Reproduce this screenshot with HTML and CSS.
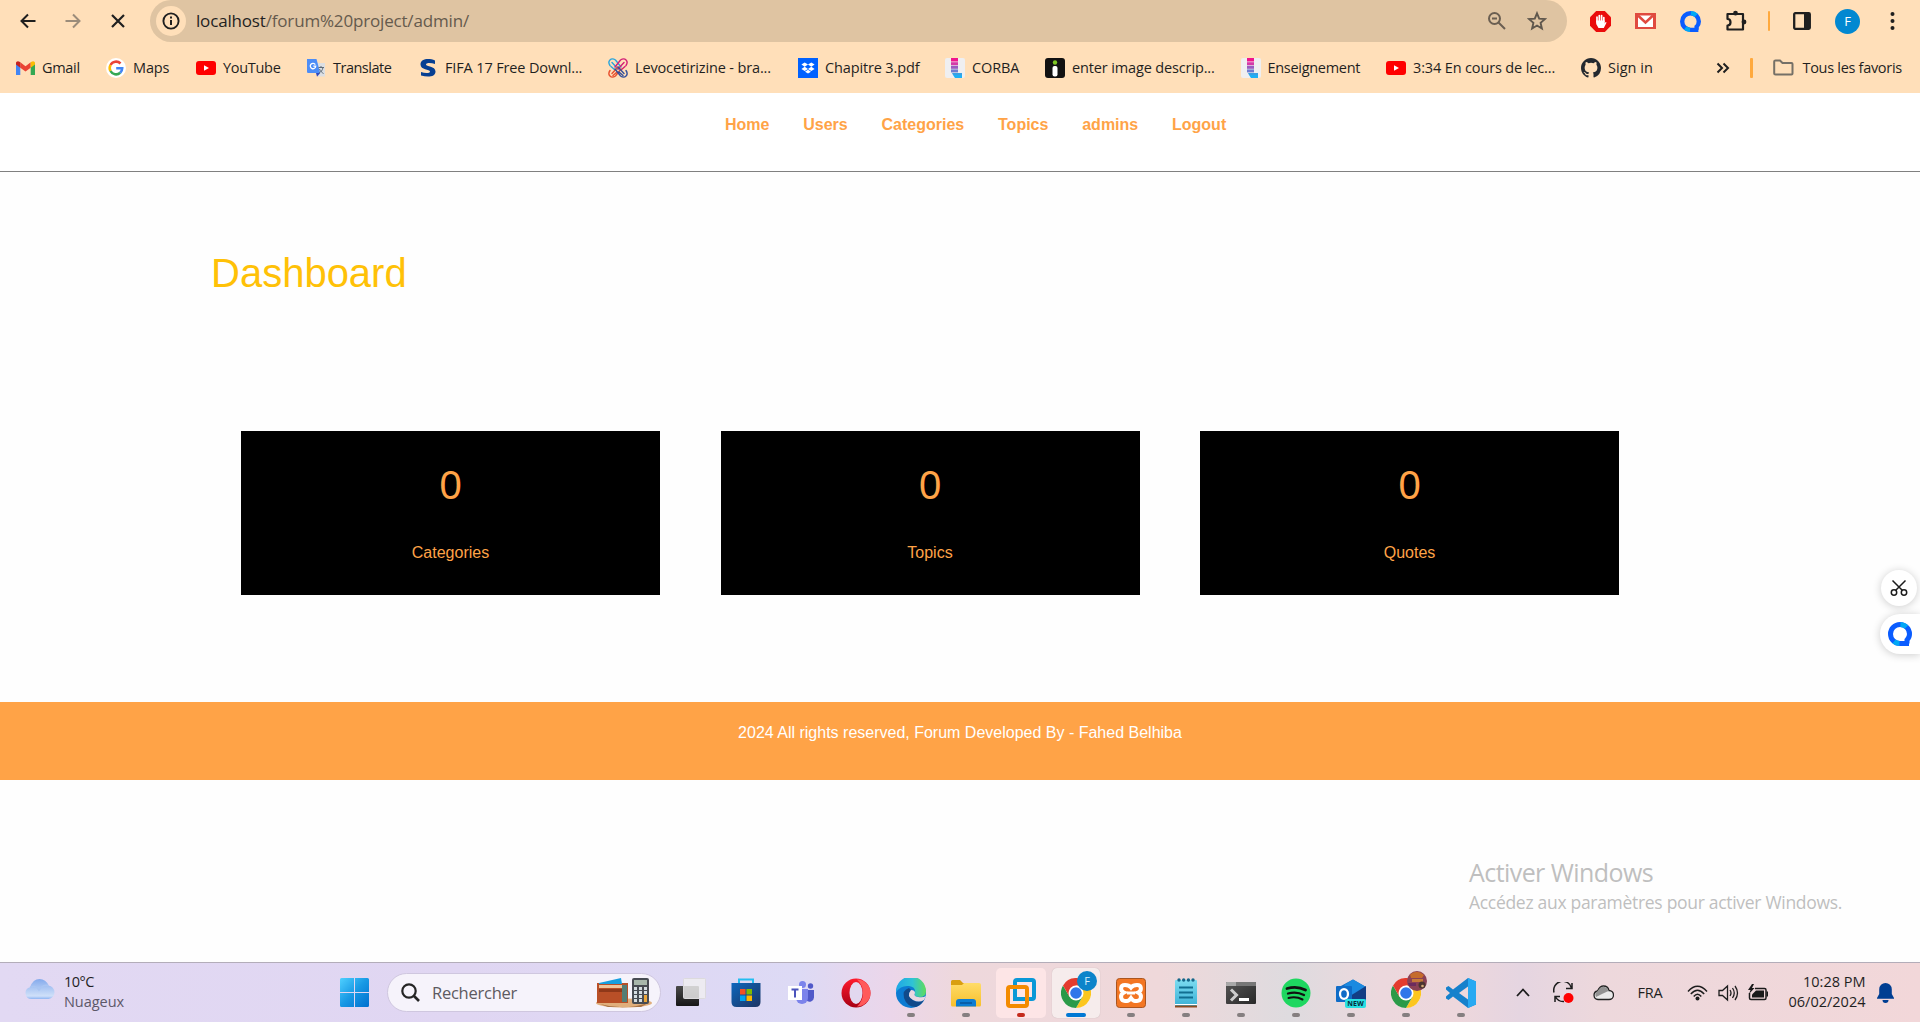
FILE: index.html
```
<!DOCTYPE html>
<html lang="fr">
<head>
<meta charset="utf-8">
<title>Dashboard</title>
<link rel="stylesheet" href="styles.css">
</head>
<body>
<svg class="defs" width="0" height="0" aria-hidden="true">
  <defs>
    <linearGradient id="gWin" x1="0" y1="0" x2="1" y2="1"><stop offset="0" stop-color="#4fd0ff"/><stop offset=".5" stop-color="#1798e4"/><stop offset="1" stop-color="#006fce"/></linearGradient>
    <linearGradient id="gCloud" x1="0" y1="0" x2="0" y2="1"><stop offset="0" stop-color="#84aaec"/><stop offset=".85" stop-color="#cfe0f9"/><stop offset="1" stop-color="#8fb5f3"/></linearGradient>
    <linearGradient id="gStore" x1="0" y1="0" x2="1" y2="1"><stop offset="0" stop-color="#0d66bd"/><stop offset="1" stop-color="#1e3562"/></linearGradient>
    <linearGradient id="gOpera" x1="0" y1="0" x2="0" y2="1"><stop offset="0" stop-color="#ff1b2d"/><stop offset="1" stop-color="#a70014"/></linearGradient>
    <linearGradient id="gEdge" x1="0" y1=".3" x2="1" y2=".3"><stop offset="0" stop-color="#1fa6e6"/><stop offset=".55" stop-color="#2fc3d5"/><stop offset="1" stop-color="#5fdc5a"/></linearGradient>
    <linearGradient id="gFolder" x1="0" y1="0" x2="0" y2="1"><stop offset="0" stop-color="#ffdc68"/><stop offset="1" stop-color="#f7bf2c"/></linearGradient>
    <linearGradient id="gNote" x1="0" y1="0" x2="0" y2="1"><stop offset="0" stop-color="#7bdcf0"/><stop offset="1" stop-color="#3bb1d6"/></linearGradient>
    <linearGradient id="gTerm" x1="0" y1="0" x2="1" y2="1"><stop offset="0" stop-color="#555"/><stop offset="1" stop-color="#292929"/></linearGradient>
    <linearGradient id="gTask" x1="0" y1="0" x2="0" y2="1"><stop offset="0" stop-color="#4a4a4a"/><stop offset="1" stop-color="#161616"/></linearGradient>
    <symbol id="chrome" viewBox="0 0 48 48">
      <circle cx="24" cy="24" r="24" fill="#fff"/>
      <path d="M24 12H44.800A24 24 0 0 1 24 48L34.400 30Z" fill="#fcc61f"/>
      <path d="M13.600 30 3.200 12A24 24 0 0 0 24 48L34.400 30Z" fill="#2b9a48"/>
      <path d="M24 12H44.800A24 24 0 0 0 3.200 12L13.600 30Z" fill="#e33b2e"/>
      <circle cx="24" cy="24" r="12" fill="#fff"/><circle cx="24" cy="24" r="9.300" fill="#2f76ea"/>
    </symbol>
    <symbol id="quark" viewBox="0 0 24 24">
      <path d="M19 21.500V18Q21.500 15.500 21.500 12A9.500 9.500 0 1 0 12 21.500H21" fill="none" stroke="#0a5cff" stroke-width="5"/>
      <path d="M12.500 2.500A9.700 9.700 0 0 1 18.500 5" fill="none" stroke="#00a8f5" stroke-width="5"/>
      <path d="M6 19.500A9.500 9.500 0 0 0 11.500 21.500" fill="none" stroke="#00a8f5" stroke-width="5"/>
    </symbol>
    <symbol id="youtube" viewBox="0 0 20 14"><rect width="20" height="14" rx="3" fill="#f00"/><path d="M8 4.200v5.600L13 7Z" fill="#fff"/></symbol>
    <symbol id="boot" viewBox="0 0 20 20">
      <rect width="20" height="20" rx="2" fill="#efeff1"/>
      <path d="M6 0h7v3.500H6Z" fill="#f0148c"/><path d="M6 4.200h7v3H6Z" fill="#d43aa8"/><path d="M6 7.800h7v3H6Z" fill="#9a5cc0"/><path d="M6 11.400h7v3H6Z" fill="#6f7bd0"/><path d="M7 15h10v2H8Z" fill="#38a0e4"/><path d="M8 17h9v3H10Z" fill="#1eb0f5"/>
    </symbol>
  </defs>
</svg>

<header class="browser">
  <div class="toolbar">
    <div class="cell"><svg width="18" height="18" viewBox="0 0 18 18" fill="none" stroke="#1f1f1f" stroke-width="2"><path d="M16.500 9H3M9 2.500 2.500 9 9 15.500"/></svg></div>
    <div class="cell"><svg width="18" height="18" viewBox="0 0 18 18" fill="none" stroke="#9b8c7a" stroke-width="2"><path d="M1.500 9H15M9 2.500 15.500 9 9 15.500"/></svg></div>
    <div class="cell"><svg width="16" height="16" viewBox="0 0 16 16" fill="none" stroke="#1f1f1f" stroke-width="2.200"><path d="M2 2l12 12M14 2 2 14"/></svg></div>
    <div class="omnibox">
      <div class="info"><svg width="18" height="18" viewBox="0 0 18 18" fill="none" stroke="#1f1f1f"><circle cx="9" cy="9" r="7.600" stroke-width="1.900"/><path d="M9 8v5" stroke-width="2"/><path d="M9 4.500v2" stroke-width="2"/></svg></div>
      <div class="url"><span class="host">localhost</span>/forum%20project/admin/</div>
      <div class="omni-icon"><svg width="20" height="20" viewBox="0 0 20 20" fill="none" stroke="#6b5f52" stroke-width="2"><circle cx="7.500" cy="7.500" r="5.500"/><path d="M11.500 11.500 18 18M5 7.500h5"/></svg></div>
      <div class="omni-icon"><svg width="20" height="20" viewBox="0 0 20 20" fill="none" stroke="#5f574d" stroke-width="1.900"><path d="M10 2.300l2.200 5.300 5.700.500-4.300 3.800 1.300 5.600L10 14.500l-4.900 3 1.300-5.600L2.100 8.100l5.700-.500Z"/></svg></div>
    </div>
    <div class="cell first"><svg width="21" height="21" viewBox="0 0 21 21"><path d="M6.200 0h8.600L21 6.200v8.600L14.800 21H6.200L0 14.800V6.200Z" fill="#ea0c0c"/><path d="M7 11V6M9.300 10V4.500M11.600 10V4.500M13.800 11V6.500" stroke="#fff" stroke-width="1.700" stroke-linecap="round"/><path d="M6.200 9.500h8.400v3l1-1.600 1 .600-2.800 5.500H8.500L6.200 13Z" fill="#fff"/></svg></div>
    <div class="cell"><svg width="21" height="16" viewBox="0 0 21 16"><rect width="21" height="16" fill="#e04a3f"/><path d="M3 2.500h15V14H3Z" fill="#fff"/><path d="M3 2.500l7.500 7 7.500-7" fill="none" stroke="#e04a3f" stroke-width="2.500"/></svg></div>
    <div class="cell"><svg width="21" height="21"><use href="#quark"/></svg></div>
    <div class="cell"><svg width="22" height="22" viewBox="0 0 22 22"><path d="M2.500 4h15.500v15.500H2.500V15.500c4 0 4-6.500 0-6.500Z" fill="none" stroke="#1f1f1f" stroke-width="2.200" stroke-linejoin="round"/><circle cx="10.500" cy="3.200" r="2.400" fill="#1f1f1f"/><circle cx="19" cy="12" r="2.400" fill="#1f1f1f"/></svg></div>
    <div class="cell narrow"><span class="divider"></span></div>
    <div class="cell side"><svg width="18" height="18" viewBox="0 0 18 18"><rect x="1.200" y="1.200" width="15.600" height="15.600" rx="1" fill="none" stroke="#1f1f1f" stroke-width="2.300"/><path d="M11 1h6v16h-6Z" fill="#1f1f1f"/></svg></div>
    <div class="cell"><span class="avatar">F</span></div>
    <div class="cell"><svg width="5" height="18" viewBox="0 0 5 18" fill="#1f1f1f"><circle cx="2.500" cy="2" r="2"/><circle cx="2.500" cy="9" r="2"/><circle cx="2.500" cy="16" r="2"/></svg></div>
  </div>
  <div class="bookmarks">
    <nav class="marks">
      <a class="mark"><svg width="19" height="14" viewBox="0 0 19 14"><path d="M0 2v12h4.300V5Z" fill="#4285f4"/><path d="M19 2v12h-4.300V5Z" fill="#34a853"/><path d="M4.300 1.300v5.400l5.200 3.900 5.200-3.900V1.300L9.500 5.200Z" fill="#ea4335"/><path d="M0 2v1.600l4.300 3.100V1.300L3.500.700C2-.500 0 .300 0 2Z" fill="#c5221f"/><path d="M19 2v1.600l-4.300 3.100V1.300l.800-.600C17-.500 19 .300 19 2Z" fill="#fbbc04"/></svg><span class="tight">Gmail</span></a>
      <a class="mark"><svg width="20" height="20" viewBox="0 0 20 20"><circle cx="10" cy="10" r="10" fill="#fff"/><g fill="none" stroke-width="2.600"><path d="M14.500 5.500A6.300 6.300 0 0 0 4.500 7" stroke="#ea4335"/><path d="M4.500 7a6.300 6.300 0 0 0 0 6" stroke="#fbbc05"/><path d="M4.500 13a6.300 6.300 0 0 0 9.700 1.800" stroke="#34a853"/><path d="M14.200 14.800A6.300 6.300 0 0 0 16.200 10.300H10.200" stroke="#4285f4"/></g></svg><span>Maps</span></a>
      <a class="mark"><svg width="20" height="14"><use href="#youtube"/></svg><span class="tight">YouTube</span></a>
      <a class="mark"><svg width="20" height="20" viewBox="0 0 20 20"><path d="M8 5h11v13.500H12Z" fill="#dcdfe3"/><path d="M1 1h9.500l3.700 14H2.500C1.500 15 1 14.500 1 13.500Z" fill="#4d8df6"/><path d="M10 15h4.200L11 18.700Z" fill="#2d47c0"/><path d="M9.300 6.600A2.700 2.700 0 1 0 9.700 8.200H7.300" fill="none" stroke="#fff" stroke-width="1.300"/><path d="M12.500 9.500h5.500M15 8v1.500M17 9.500c-.600 3-2 4.500-4 5.500M13.500 11c1 2.500 2.500 3.500 4 4.500" fill="none" stroke="#5f6b76" stroke-width="1"/></svg><span class="tighter">Translate</span></a>
      <a class="mark"><svg width="19" height="20" viewBox="0 0 19 20"><path d="M16 2.500V6C12 4.500 7 4.500 7 6.500s9.500 1.500 9.500 7C16.500 19 9 19.500 2 17.500V14c4 1.500 9 1.500 9-.500S1.500 12 1.500 6.500C1.500.500 10 0 16 2.500Z" fill="#063f92"/></svg><span>FIFA 17 Free Downl...</span></a>
      <a class="mark"><svg width="20" height="20" viewBox="0 0 20 20" fill="none" stroke-width="1.400" stroke-linecap="round"><path d="M2 7.500C-1 3 3-1 7.500 2L13 9M4 4.500 10 11M3 8.500 7 12" stroke="#2aa5dc"/><path d="M18 7.500C21 3 17-1 12.500 2L7 9M16 4.500 10 11M17 8.500 13 12" stroke="#d31f76"/><path d="M2 12.500C-1 17 3 21 7.500 18L13 11M4 15.500 10 9M5 17.500 9 14" stroke="#e8502e"/><path d="M18 12.500C21 17 17 21 12.500 18L7 11M16 15.500 10 9M15 17.500 11 14" stroke="#34509c"/></svg><span>Levocetirizine - bra...</span></a>
      <a class="mark"><svg width="20" height="20" viewBox="0 0 20 20"><rect width="20" height="20" fill="#0061ff"/><path d="M6.700 4.500 10 6.600 6.700 8.700 3.400 6.600ZM13.300 4.500l3.300 2.100-3.300 2.100L10 6.600ZM6.700 8.800 10 10.900 6.700 13 3.400 10.900ZM13.300 8.800l3.300 2.100L13.300 13 10 10.900ZM10 11.800l3 1.900-3 1.900-3-1.900Z" fill="#fff"/></svg><span>Chapitre 3.pdf</span></a>
      <a class="mark"><svg width="20" height="20"><use href="#boot"/></svg><span>CORBA</span></a>
      <a class="mark"><svg width="20" height="20" viewBox="0 0 20 20"><rect width="20" height="20" rx="3" fill="#111"/><circle cx="10" cy="4.500" r="2.200" fill="#7cc623"/><rect x="7.500" y="8" width="5" height="10.500" rx="2" fill="#fff"/></svg><span>enter image descrip...</span></a>
      <a class="mark"><svg width="20" height="20"><use href="#boot"/></svg><span class="tight">Enseignement</span></a>
      <a class="mark"><svg width="20" height="14"><use href="#youtube"/></svg><span>3:34 En cours de lec...</span></a>
      <a class="mark"><svg width="20" height="20" viewBox="0 0 16 16"><path fill="#24292f" d="M8 0C3.580 0 0 3.580 0 8c0 3.540 2.290 6.530 5.470 7.590.400.070.550-.170.550-.380 0-.190-.010-.820-.010-1.490-2.010.370-2.530-.490-2.690-.940-.090-.230-.480-.940-.820-1.130-.280-.150-.680-.520-.010-.530.630-.010 1.080.580 1.230.820.720 1.210 1.870.870 2.330.660.070-.520.280-.870.510-1.070-1.780-.200-3.640-.890-3.640-3.950 0-.870.310-1.590.820-2.150-.080-.200-.360-1.020.080-2.120 0 0 .670-.210 2.200.820a7.600 7.600 0 0 1 4 0c1.530-1.040 2.200-.820 2.200-.820.440 1.100.160 1.920.080 2.120.510.560.820 1.270.820 2.150 0 3.070-1.870 3.750-3.650 3.950.290.250.540.730.540 1.480 0 1.070-.010 1.930-.010 2.200 0 .210.150.460.550.380A8.010 8.010 0 0 0 16 8c0-4.420-3.580-8-8-8Z"/></svg><span class="loose">Sign in</span></a>
    </nav>
    <svg class="more" width="14" height="12" viewBox="0 0 14 12" fill="none" stroke="#1f1f1f" stroke-width="2"><path d="M1.500 1.500 6 6l-4.500 4.500M7.500 1.500 12 6l-4.500 4.500"/></svg>
    <span class="divider"></span>
    <a class="mark all"><svg width="21" height="17" viewBox="0 0 21 17" fill="none" stroke="#757067" stroke-width="2"><path d="M2.500 1.500H7l2.500 2.500h9Q19.500 4 19.500 5v9.500Q19.500 15.500 18.500 15.500H2.500Q1.200 15.500 1.200 14.500V2.500Q1.200 1.500 2.500 1.500Z"/></svg><span class="tight">Tous les favoris</span></a>
  </div>
</header>

<main class="page">
  <nav class="site-nav">
    <a>Home</a><a>Users</a><a>Categories</a><a>Topics</a><a>admins</a><a>Logout</a>
  </nav>
  <section class="dashboard">
    <h1>Dashboard</h1>
    <div class="stats">
      <div class="stat"><div class="value">0</div><div class="label">Categories</div></div>
      <div class="stat"><div class="value">0</div><div class="label">Topics</div></div>
      <div class="stat"><div class="value">0</div><div class="label">Quotes</div></div>
    </div>
  </section>
  <footer class="site-footer">2024 All rights reserved, Forum Developed By - Fahed Belhiba</footer>
  <div class="watermark"><div class="wm-title">Activer Windows</div><div class="wm-text">Accédez aux paramètres pour activer Windows.</div></div>
</main>

<div class="float cut"><svg width="18" height="18" viewBox="0 0 18 18" fill="none" stroke="#1c1c1c" stroke-width="1.500"><circle cx="4" cy="13.500" r="2.700"/><circle cx="14" cy="13.500" r="2.700"/><path d="M2.500 1.500 12.500 11.500M15.500 1.500 5.500 11.500"/></svg></div>
<div class="float assist"><svg width="24" height="24"><use href="#quark"/></svg></div>

<footer class="taskbar">
  <div class="weather">
    <svg width="30" height="20" viewBox="0 0 30 20"><path d="M6.500 20A6 6 0 0 1 5 8.200Q8 0 14.500 0T23.500 6.500A6.800 6.800 0 0 1 23.500 20Z" fill="url(#gCloud)"/><path d="M5 8.200Q11 6 14 11Q18 5 23.500 6.500" fill="none" stroke="#a9c5f2" stroke-width="1.500"/></svg>
    <div class="forecast"><div class="temp">10°C</div><div class="sky">Nuageux</div></div>
  </div>
  <svg class="start" width="29" height="29" viewBox="0 0 29 29" fill="url(#gWin)"><path d="M0 1.500Q0 0 1.500 0H14V14H0ZM15 0h12.500Q29 0 29 1.500V14H15ZM0 15h14v14H1.500Q0 29 0 27.500ZM15 15h14v12.500Q29 29 27.500 29H15Z"/></svg>
  <div class="search">
    <svg width="19" height="19" viewBox="0 0 19 19" fill="none" stroke="#252525" stroke-width="2.200"><circle cx="8" cy="8" r="6.700"/><path d="M12.500 12.500 18 18" stroke-width="2.600"/></svg>
    <span>Rechercher</span>
    <svg width="56" height="31" viewBox="0 0 56 31"><ellipse cx="28" cy="26" rx="28" ry="4.500" fill="#e0ae7c"/><path d="M4 27q24 7 48-1l-7 4H12Z" fill="#a87345"/><path d="M1 6h31v20H1Z" fill="#b94f27"/><path d="M3 6l22-5 1 6H3Z" fill="#169fe0"/><path d="M3 8h23v3H3Z" fill="#efc49a"/><path d="M3 12h24v3H3Z" fill="#8f3819"/><path d="M26 8h5v17h-5Z" fill="#557d75"/><rect x="36" y="1" width="17" height="26" rx="2" fill="#474b52"/><path d="M38 3h13v5H38Z" fill="#a8b7ab"/><path d="M38 10h3v3h-3Zm5 0h3v3h-3Zm5 0h3v3h-3ZM38 14h3v3h-3Zm5 0h3v3h-3Zm5 0h3v3h-3ZM38 18h3v3h-3Zm5 0h3v3h-3Zm-5 4h3v3h-3Zm5 0h3v3h-3Z" fill="#d4dce0"/><path d="M48 18h3v7h-3Z" fill="#e9a53a"/></svg>
  </div>
  <div class="apps">
    <div class="app"><svg width="30" height="30" viewBox="0 0 30 30"><rect x="0" y="8" width="23" height="20" rx="1" fill="url(#gTask)"/><rect x="7.500" y=".500" width="22" height="20" rx="1" fill="#f0eff0" fill-opacity=".82" stroke="#dcdadd"/></svg></div>
    <div class="app"><svg width="30" height="30" viewBox="0 0 30 30"><path d="M8 6V1.500h14V6" fill="none" stroke="#24bdf0" stroke-width="2"/><path d="M.500 5h29v19q0 5-5 5h-19q-5 0-5-5Z" fill="url(#gStore)"/><path d="M9 11h5.500v5.500H9Z" fill="#f25022"/><path d="M15.500 11H21v5.500h-5.500Z" fill="#7fba00"/><path d="M9 17.500h5.500V23H9Z" fill="#00a4ef"/><path d="M15.500 17.500H21V23h-5.500Z" fill="#ffb900"/></svg></div>
    <div class="app"><svg width="26" height="24" viewBox="0 0 26 24"><circle cx="14.500" cy="3.500" r="3.500" fill="#7b83eb"/><circle cx="22.500" cy="5" r="2.700" fill="#5059c9"/><path d="M18 9h8v7a4.500 4.500 0 0 1-8 3Z" fill="#5059c9"/><path d="M8 8h12v9a6 6 0 0 1-12 0Z" fill="#7b83eb"/><rect y="5" width="14" height="14" fill="#fff"/><path d="M3.500 8.500h7M7 8.500v8" stroke="#4b53bc" stroke-width="2"/></svg></div>
    <div class="app"><svg width="30" height="30" viewBox="0 0 30 30"><circle cx="15" cy="15" r="14.500" fill="url(#gOpera)"/><path d="M16 1.500a13.500 13.500 0 0 1 0 27Q22 23 22 15T16 1.500Z" fill="#ff5a5a"/><ellipse cx="15" cy="15" rx="6.500" ry="11" fill="#e2d8ef"/></svg></div>
    <div class="app"><svg width="30" height="30" viewBox="0 0 30 30"><circle cx="15" cy="15" r="15" fill="#0c7bd2"/><path d="M0 14A15 15 0 0 1 30 13Q30 19 24 19Q17 19 19 15Q20 9 13 8Q5 7 0 14Z" fill="url(#gEdge)"/><path d="M13 10Q6 12 8 20Q11 29 20 29A15 15 0 0 0 28 22Q22 25 17 22Q11 17 15 12Z" fill="#114a8b"/><path d="M15 12Q10 18 17 22Q23 25 28 22L30 18Q27 20 22 19Q17 18 19 15Q19 12 15 12Z" fill="#ead7e1"/></svg><i></i></div>
    <div class="app"><svg width="30" height="30" viewBox="0 0 30 30"><path d="M0 3.500Q0 2 1.500 2H9l3 3H25v5H0Z" fill="#d99f10"/><path d="M0 7h11l2-2h15q2 0 2 2v20q0 1.500-1.500 1.500h-27Q0 28.500 0 27Z" fill="url(#gFolder)"/><path d="M5 28.500V24q0-3 3-3h14q3 0 3 3v4.500Z" fill="#0c7dd3"/><path d="M9 25h12" stroke="#07549b" stroke-width="1.500"/></svg><i></i></div>
    <div class="app pink"><svg width="30" height="30" viewBox="0 0 30 30" fill="none" stroke-width="4"><rect x="9" y="2" width="19" height="19" rx="2" stroke="#0a98d7"/><rect x="2" y="9" width="19" height="19" rx="2" stroke="#f38b00"/><path d="M9 11v10h10" stroke="#0a98d7"/></svg><i class="red"></i></div>
    <div class="app active"><svg width="30" height="30"><use href="#chrome"/></svg><b>F</b><i class="wide"></i></div>
    <div class="app"><svg width="30" height="30" viewBox="0 0 30 30"><rect x=".500" y=".500" width="29" height="29" rx="3" fill="#f37623" stroke="#a95520"/><path d="M9 7C4 7 4 13 8 14.500C3 17 5 23 9 23H11Q13 23 15 20Q17 23 19 23H21C25 23 27 17 22 14.500C26 13 26 7 21 7Q17 7 15 9.500Q13 7 9 7Z" fill="none" stroke="#fff" stroke-width="4"/><path d="M11 15h8" stroke="#fff" stroke-width="3"/></svg><i></i></div>
    <div class="app"><svg width="24" height="30" viewBox="0 0 24 30"><rect x="1" y="2" width="22" height="26" rx="1" fill="url(#gNote)"/><path d="M1 28.500h22" stroke="#8d4b20" stroke-width="2"/><path d="M1 26.500h22" stroke="#fff"/><path d="M5 9.500h14M5 14.500h14M5 19.500h14" stroke="#116f91" stroke-width="2"/><g fill="#15678a"><circle cx="5" cy="2" r="1.700"/><circle cx="9.700" cy="2" r="1.700"/><circle cx="14.400" cy="2" r="1.700"/><circle cx="19" cy="2" r="1.700"/></g></svg><i></i></div>
    <div class="app"><svg width="30" height="24" viewBox="0 0 30 24"><rect y="1" width="30" height="22" rx="1" fill="url(#gTerm)"/><path d="M0 5V2Q0 1 1 1H10V5Z" fill="#a8a8a8"/><path d="M10 1H29Q30 1 30 2V5H10Z" fill="#777"/><path d="M5 8.500l5.500 5.500L5 19.500" fill="none" stroke="#ccc" stroke-width="3"/><path d="M13 18.500h10" stroke="#fff" stroke-width="3"/></svg><i></i></div>
    <div class="app"><svg width="30" height="30" viewBox="0 0 30 30"><circle cx="15" cy="15" r="14.500" fill="#1ed760"/><g fill="none" stroke="#111" stroke-linecap="round"><path d="M6 10.500Q16 7.500 24.500 12" stroke-width="2.800"/><path d="M7 15.500Q15.500 13 23 17" stroke-width="2.300"/><path d="M7.500 20Q15 18 21.500 21.500" stroke-width="2"/></g></svg><i></i></div>
    <div class="app"><svg width="30" height="30" viewBox="0 0 30 30"><path d="M3 9 17 1.500 30 9V24H5Z" fill="#1469bb"/><path d="M17 1.500 30 9 16 18 8 7Z" fill="#1b8ae0"/><path d="M14 18 30 8v13H14Z" fill="#123e84"/><rect y="8" width="16" height="16" rx="1" fill="#0f6cc7"/><ellipse cx="8" cy="16" rx="4" ry="4.800" fill="none" stroke="#fff" stroke-width="2.300"/><rect x="9" y="21" width="21" height="9" rx="2" fill="#28e0e2"/><text x="19.500" y="28.200" class="new">NEW</text></svg><i></i></div>
    <div class="app profile"><svg width="30" height="30"><use href="#chrome"/></svg><svg class="face" width="20" height="20" viewBox="0 0 20 20"><circle cx="10" cy="10" r="10" fill="#8a4155"/><path d="M3 3.500Q10-2 17 4L15 7H4Z" fill="#c56b2c"/><path d="M5 8h11v3H5Z" fill="#c77a3a"/><path d="M1 12h8v3H2Z" fill="#6c2b5e"/><circle cx="15" cy="14" r="3.500" fill="#4b3431"/><circle cx="15.500" cy="15" r="1.300" fill="#d9ad7a"/></svg><i></i></div>
    <div class="app"><svg width="30" height="30" viewBox="0 0 30 30"><path d="M22 0 30 3.500V26.500L22 30 7 18.500 2.500 22 0 20.500V18.500L4 15 0 11.500V9.500L2.500 8 7 11.500Z" fill="#1681cc"/><path d="M22 8.500 13 15l9 6.500Z" fill="#eed8dc"/><path d="M22 0 30 3.500V26.500L22 30Z" fill="#28a9f2"/></svg><i></i></div>
  </div>
  <div class="tray">
    <div class="tcell"><svg width="14" height="9" viewBox="0 0 14 9" fill="none" stroke="#1d1d1d" stroke-width="1.800"><path d="M1 8 7 1.500 13 8"/></svg></div>
    <div class="tcell"><svg width="21" height="21" viewBox="0 0 21 21" fill="none" stroke="#1d1d1d" stroke-width="1.500"><path d="M1 10.500A9 9 0 0 1 18.500 6M19 1v5.500h-6M2 20v-5.500h5M2.500 15A9 9 0 0 0 11 19.500"/><circle cx="15.500" cy="16" r="5" fill="red" stroke="none"/></svg></div>
    <div class="tcell"><svg width="21" height="16" viewBox="0 0 21 16"><path d="M5 14.500A4.300 4.300 0 0 1 4.500 6Q7 1 10.500 1Q15 1 16 5.500A4.500 4.500 0 0 1 16 14.500Z" fill="#e9e9e9" stroke="#222" stroke-width="1.300"/><path d="M4.800 6Q7 1.500 10.500 1.700Q14.500 2 15.500 6L10 8.500 3 12Q1 8 4.800 6Z" fill="#929292"/></svg></div>
    <div class="tcell lang">FRA</div>
    <div class="tcell wifi"><svg width="21" height="16" viewBox="0 0 21 16" fill="none" stroke="#1d1d1d" stroke-width="1.400"><path d="M1 6.500Q10.500-4 20 6.500M3.800 9Q10.500 1.500 17.200 9M6.700 11.500Q10.500 7 14.300 11.500"/><circle cx="10.500" cy="13.500" r="2" fill="#1d1d1d" stroke="none"/></svg></div>
    <div class="tcell small"><svg width="21" height="18" viewBox="0 0 21 18" fill="none" stroke="#1d1d1d" stroke-width="1.300"><path d="M1 6.500h3.500L9.500 2v14l-5-4.500H1ZM12 6q2 3 0 6M14.500 4q3.500 5 0 10M17 2q5 7 0 14"/></svg></div>
    <div class="tcell small"><svg width="21" height="17" viewBox="0 0 21 17"><path d="M7 4.500h9.500q1.500 0 1.500 1.500v8q0 1.500-1.500 1.500H3q-1.500 0-1.500-1.500V9" fill="none" stroke="#1a1a1a" stroke-width="1.500"/><path d="M8 6.500h8v7H4V10.500Z" fill="#1a1a1a"/><path d="M18.500 7.500h1.500v5h-1.500Z" fill="#1a1a1a"/><path d="M4 0 0 6h2.500L1 10l5.500-6H4L6 0Z" fill="#1a1a1a"/></svg></div>
    <div class="clock"><div>10:28 PM</div><div>06/02/2024</div></div>
    <svg class="bell" width="17" height="20" viewBox="0 0 17 20" fill="#003e92"><path d="M8.500 0A6.300 6.300 0 0 1 14.800 6.300V11L17 15v.800H0V15L2.200 11V6.300A6.300 6.300 0 0 1 8.500 0ZM5.500 17h6a3 3 0 0 1-6 0Z"/></svg>
  </div>
</footer>
</body>
</html>
```
FILE: styles.css
```
* { box-sizing: border-box; }

body {
  margin: 0;
  width: 1920px;
  height: 1022px;
  overflow: hidden;
  display: flex;
  flex-direction: column;
  background: #fefefe;
  font-family: "Open Sans", sans-serif;
  color: #1f1f1f;
}

svg { display: block; flex: none; }
.defs { position: absolute; }

/* Browser chrome */
.browser {
  height: 93px;
  flex: none;
  background: #ffdfb9;
}
.toolbar {
  height: 42px;
  display: flex;
  align-items: center;
  padding-left: 5px;
}
.cell {
  width: 45px;
  flex: none;
  display: flex;
  justify-content: center;
}
.cell.first { margin-left: 11px; }
.cell.narrow { width: 22px; }
.cell.side { padding-right: 1px; }
.omnibox {
  width: 1417px;
  height: 42px;
  margin-left: 10px;
  padding: 0 10px 0 6px;
  display: flex;
  align-items: center;
  background: #dfc4a2;
  border-radius: 21px;
}
.info {
  width: 30px;
  height: 30px;
  display: grid;
  place-items: center;
  background: #ffdfb9;
  border-radius: 50%;
}
.url {
  flex: 1;
  padding-left: 10px;
  font-size: 17px;
  letter-spacing: -0.17px;
  line-height: 24px;
  color: #655a4d;
}
.host { color: #1f1f1f; }
.omni-icon {
  width: 40px;
  display: flex;
  justify-content: center;
}
.divider {
  width: 2px;
  height: 20px;
  flex: none;
  border-radius: 1px;
  background: #ffa93d;
}
.avatar {
  width: 25px;
  height: 25px;
  border-radius: 50%;
  background: #0288d1;
  color: #fff;
  font-size: 13px;
  line-height: 25px;
  text-align: center;
}
.bookmarks {
  height: 51px;
  display: flex;
  align-items: center;
  padding-left: 16px;
}
.marks {
  display: grid;
  grid-template-columns: 90px 90px 110px 113px 189px 190px 147px 100px 195.5px 145.5px 195px 134.5px;
}
.mark {
  display: flex;
  align-items: center;
  gap: 7px;
  font-size: 14.5px;
  line-height: 20px;
  letter-spacing: -0.14px;
  white-space: nowrap;
}
.loose { letter-spacing: 0.04px; }
.tight { letter-spacing: -0.3px; }
.tighter { letter-spacing: -0.5px; }
.bookmarks .divider { width: 3px; margin: 0 20px 0 20px; }
.mark.all { gap: 9px; }

/* Admin page */
.page {
  flex: 1;
  display: flex;
  flex-direction: column;
  font-family: "Liberation Sans", Arial, sans-serif;
  font-size: 16px;
  line-height: 24px;
}
.site-nav {
  height: 79px;
  flex: none;
  padding: 20px 0 0 725px;
  display: flex;
  gap: 33.8px;
  border-bottom: 1px solid #808080;
  background: #fff;
  font-weight: 700;
  color: #ffa347;
}
.dashboard {
  height: 530px;
  flex: none;
  padding: 77px 270px 0 211px;
}
.dashboard h1 {
  margin: 0;
  font-size: 40px;
  font-weight: 400;
  line-height: 48px;
  color: #ffc107;
}
.stats {
  margin-top: 134px;
  padding: 0 30px;
  display: grid;
  grid-template-columns: repeat(3, 419px);
  gap: 60.5px;
}
.stat {
  height: 164px;
  padding-top: 30px;
  background: #000;
  color: #ffa347;
  text-align: center;
}
.value {
  font-size: 40px;
  line-height: 48px;
}
.label { margin-top: 32px; }
.site-footer {
  height: 78px;
  flex: none;
  padding-top: 19px;
  background: #ffa347;
  color: #fff;
  text-align: center;
}
.watermark {
  padding: 75px 0 0 1469px;
  font-family: "Open Sans", sans-serif;
  color: #bfbfbf;
  white-space: nowrap;
}
.wm-title {
  font-size: 25px;
  line-height: 34px;
  letter-spacing: -0.57px;
}
.wm-text {
  font-size: 17.5px;
  line-height: 26px;
  letter-spacing: -0.3px;
}

/* Extension buttons over the page */
.float {
  position: absolute;
  display: flex;
  align-items: center;
  background: #fff;
  box-shadow: 0 1px 8px rgba(0, 0, 0, .2);
}
.cut {
  left: 1881px;
  top: 570px;
  width: 36px;
  height: 36px;
  justify-content: center;
  border-radius: 50%;
}
.assist {
  left: 1880px;
  top: 614px;
  width: 40px;
  height: 40px;
  padding-left: 8px;
  border-radius: 20px 0 0 20px;
}

/* Windows taskbar */
.taskbar {
  height: 60px;
  flex: none;
  display: flex;
  align-items: center;
  border-top: 1px solid #b3adb9;
  background: linear-gradient(90deg, #e2d9f3 0, #e0d6f2 460px, #dddaf5 800px, #ebd6ea 890px, #eed8dc 960px, #efd8da 1160px, #dedbdf 1290px, #ecd8dd 1380px, #edd7dc 1460px, #e5d5e1 1520px, #edd8dc 1600px, #f2d7d9 1920px);
}
.weather {
  width: 340px;
  padding-left: 25px;
  display: flex;
  align-items: center;
  gap: 9px;
  font-size: 14.5px;
  line-height: 20px;
}
.weather svg { margin-bottom: 7px; }
.forecast { padding-bottom: 2px; }
.temp { letter-spacing: -0.48px; }
.sky { color: #5c5768; letter-spacing: -0.05px; }
.search {
  width: 274px;
  height: 39px;
  margin-left: 18px;
  padding: 0 8px 0 13px;
  display: flex;
  align-items: center;
  border: 1px solid #cfc7df;
  border-radius: 20px;
  background: #f6f3fb;
}
.search span {
  flex: 1;
  padding-left: 12px;
  font-size: 16.5px;
  letter-spacing: -0.25px;
  color: #5d5a61;
}
.apps {
  margin-left: 2.5px;
  display: flex;
}
.app {
  position: relative;
  width: 55px;
  height: 50px;
  display: grid;
  place-items: center;
}
.app i {
  position: absolute;
  left: 23.5px;
  bottom: 1px;
  width: 8px;
  height: 4px;
  border-radius: 2px;
  background: #857f80;
}
.app i.red { background: #c42b1c; }
.app i.wide {
  left: 18px;
  width: 20px;
  background: #0078d4;
}
.app.pink, .app.active {
  width: 50px;
  margin: 0 2.5px;
  border-radius: 5px;
  background: #fde5e6;
}
.app.pink i { left: 21px; }
.app.active {
  width: 48px;
  margin: 0 3.5px;
  background: #f6ecec;
  box-shadow: 0 0 1px #b9adad;
}
.app.active i.wide { left: 14px; }
.app b {
  position: absolute;
  left: 25px;
  top: 3px;
  width: 20px;
  height: 20px;
  border-radius: 50%;
  background: #0c84ca;
  color: #d8effb;
  font-size: 11px;
  font-weight: 400;
  line-height: 20px;
  text-align: center;
}
.face {
  position: absolute;
  left: 28.5px;
  top: 3px;
}
.new {
  font: 700 7px "Open Sans", sans-serif;
  text-anchor: middle;
  fill: #062c3c;
}
.tray {
  margin-left: 14.5px;
  display: flex;
  align-items: center;
}
.tcell {
  width: 40px;
  display: flex;
  justify-content: center;
}
.lang {
  width: 54px;
  font-size: 14.5px;
  letter-spacing: -0.2px;
}
.wifi { width: 31px; margin-left: 5px; }
.small { width: 30px; }
.clock {
  width: 92.5px;
  padding-bottom: 2px;
  font-size: 14.5px;
  line-height: 20px;
  text-align: right;
}
.bell { margin-left: 11.5px; }
```
